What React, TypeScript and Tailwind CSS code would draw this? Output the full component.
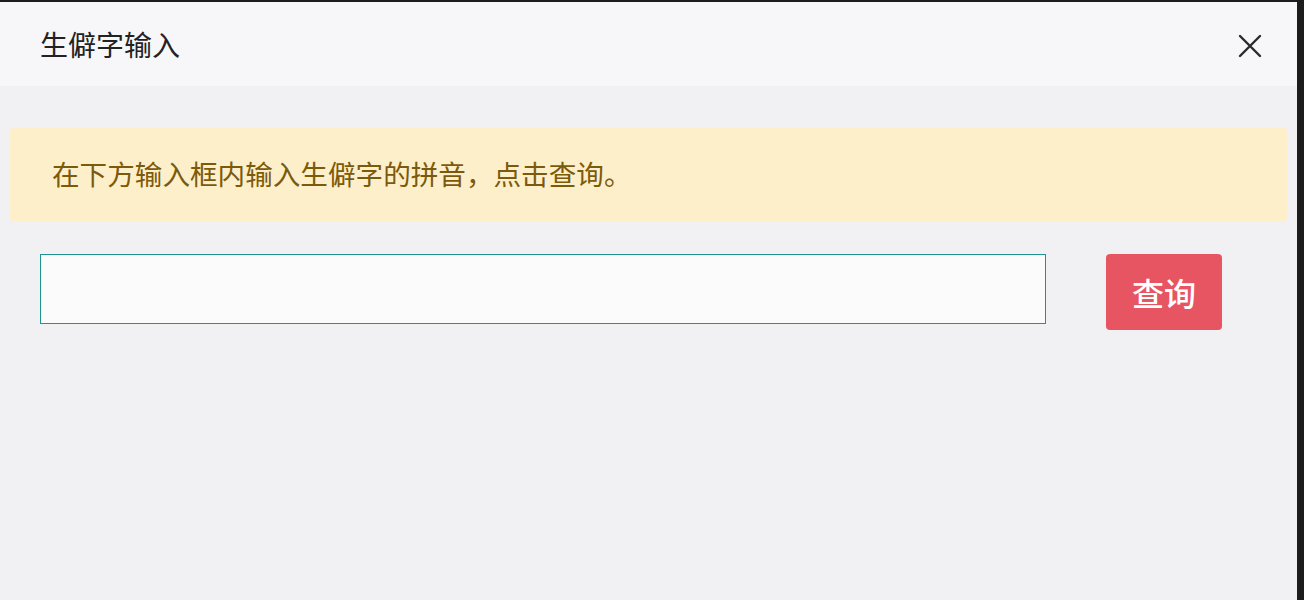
import React from "react";

export default function App() {
  return (
    <div
      className="w-[1304px] h-[600px] bg-[#1c1c1c] pt-[2px] pr-[7px] overflow-hidden"
      style={{ fontFamily: '"Noto Sans CJK SC", "Noto Sans", sans-serif' }}
    >
      <div className="h-full flex flex-col bg-[#f1f0f2]">
        <div className="h-[84px] shrink-0 bg-[#f7f6f8] flex items-center justify-between pl-[40px] pr-[35px]">
          <div className="text-[28px] leading-none text-[#222] -mt-[1px]">生僻字输入</div>
          <svg width="24" height="24" viewBox="0 0 24 24" className="mt-[4px]">
            <path d="M2 2 L22 22 M22 2 L2 22" stroke="#2a2a2a" strokeWidth="2.4" strokeLinecap="round" />
          </svg>
        </div>
        <div className="flex flex-col pt-[42px] pl-[10px] pr-[10px]">
          <div className="h-[93px] rounded-[4px] bg-[#fdefca] flex items-center pl-[42px]">
            <span className="text-[27.6px] leading-none text-[#7b5a0c] -mt-[1px]">
              在下方输入框内输入生僻字的拼音，点击查询。
            </span>
          </div>
          <div className="flex items-start pt-[33px] pl-[30px]">
            <input
              className="w-[1006px] h-[70px] border-[1.5px] border-[#1d948f] bg-[#fbfbfc] outline-none"
              type="text"
            />
            <button className="ml-[60px] w-[116px] h-[76px] rounded-[4px] bg-[#e85562] text-white text-[32px] font-medium leading-none flex items-center justify-center">
              查询
            </button>
          </div>
        </div>
      </div>
    </div>
  );
}
